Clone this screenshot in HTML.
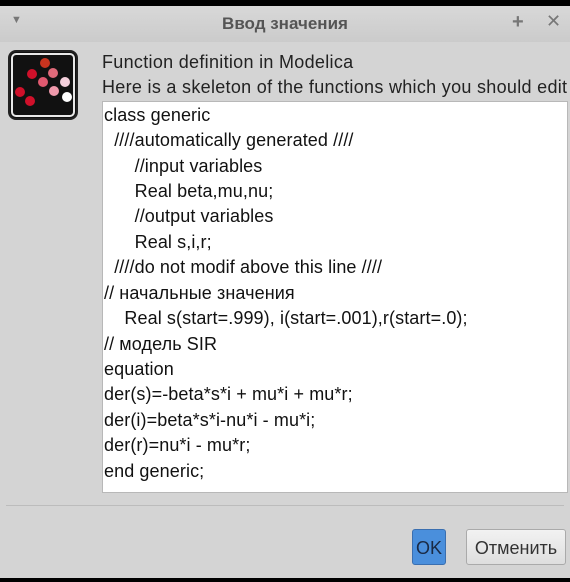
<!DOCTYPE html>
<html><head><meta charset="utf-8"><style>
body{margin:0;width:570px;height:582px;background:#000;position:relative;overflow:hidden;font-family:"Liberation Sans","DejaVu Sans",sans-serif;}
.win{position:absolute;left:0;top:6px;width:570px;height:572px;background:#d4d4d4;}
.title{position:absolute;left:0;top:0;width:570px;height:36px;background:linear-gradient(#d8d8d8,#cbcbcb);}
.title .t{position:absolute;left:0;width:570px;top:8px;text-align:center;font-weight:bold;font-size:17px;color:#555;}
.lbl{position:absolute;left:102px;font-size:18px;letter-spacing:0.3px;color:#222;white-space:nowrap;}
.ta{position:absolute;left:102px;top:95px;width:464px;height:390px;background:#fff;border:1px solid #b8b8b8;}
.ta div{position:absolute;left:1px;font-size:18px;letter-spacing:0.1px;color:#111;white-space:pre;}
.sep{position:absolute;left:6px;width:558px;top:499px;height:1px;background:#bcbcbc;}
.btn{position:absolute;top:523px;height:36px;border-radius:3px;font-size:18px;text-align:center;line-height:36px;box-sizing:border-box;}
</style></head><body>
<div class="win">
<div class="title"><span style="position:absolute;left:11px;top:8px;color:#777;font-size:11px">▼</span><div class="t">Ввод значения</div><span style="position:absolute;left:512px;top:5px;color:#777;font-size:20px;font-weight:bold">+</span><span style="position:absolute;left:546px;top:5px;color:#777;font-size:18px;font-weight:bold">✕</span></div>
<svg style="position:absolute;left:7px;top:43px" width="72" height="72" viewBox="7 49 72 72">
<rect x="9" y="51" width="68" height="68" rx="7" fill="#111" stroke="#222" stroke-width="2"/>
<rect x="12" y="54" width="62" height="62" rx="4" fill="none" stroke="#e8e8e8" stroke-width="2"/>
<circle cx="45" cy="63" r="5" fill="#c8341f"/><circle cx="32" cy="74" r="5" fill="#d0102a"/><circle cx="53" cy="73" r="5" fill="#e06a7a"/>
<circle cx="43" cy="82" r="5" fill="#e05a70"/><circle cx="65" cy="82" r="5" fill="#f4d0dc"/><circle cx="20" cy="92" r="5" fill="#d0102a"/>
<circle cx="54" cy="91" r="5" fill="#f09aac"/><circle cx="67" cy="97" r="5" fill="#fff"/><circle cx="30" cy="101" r="5" fill="#d0102a"/>
</svg>
<div class="lbl" style="top:46px">Function definition in Modelica</div>
<div class="lbl" style="top:71px">Here is a skeleton of the functions which you should edit</div>
<div class="ta">
<div style="top:3px">class generic</div>
<div style="top:28px">  ////automatically generated ////</div>
<div style="top:54px">      //input variables</div>
<div style="top:79px">      Real beta,mu,nu;</div>
<div style="top:104px">      //output variables</div>
<div style="top:130px">      Real s,i,r;</div>
<div style="top:155px">  ////do not modif above this line ////</div>
<div style="top:181px">// начальные значения</div>
<div style="top:206px">    Real s(start=.999), i(start=.001),r(start=.0);</div>
<div style="top:232px">// модель SIR</div>
<div style="top:257px">equation</div>
<div style="top:282px">der(s)=-beta*s*i + mu*i + mu*r;</div>
<div style="top:308px">der(i)=beta*s*i-nu*i - mu*i;</div>
<div style="top:333px">der(r)=nu*i - mu*r;</div>
<div style="top:359px">end generic;</div>
</div>
<div class="sep"></div>
<div class="btn" style="left:412px;width:34px;background:#4a8fdc;border:1px solid #3a6fb0;color:#1a2a44">OK</div>
<div class="btn" style="left:466px;width:100px;background:linear-gradient(#f2f2f2,#dedede);border:1px solid #aaa;color:#333">Отменить</div>
</div>
</body></html>
